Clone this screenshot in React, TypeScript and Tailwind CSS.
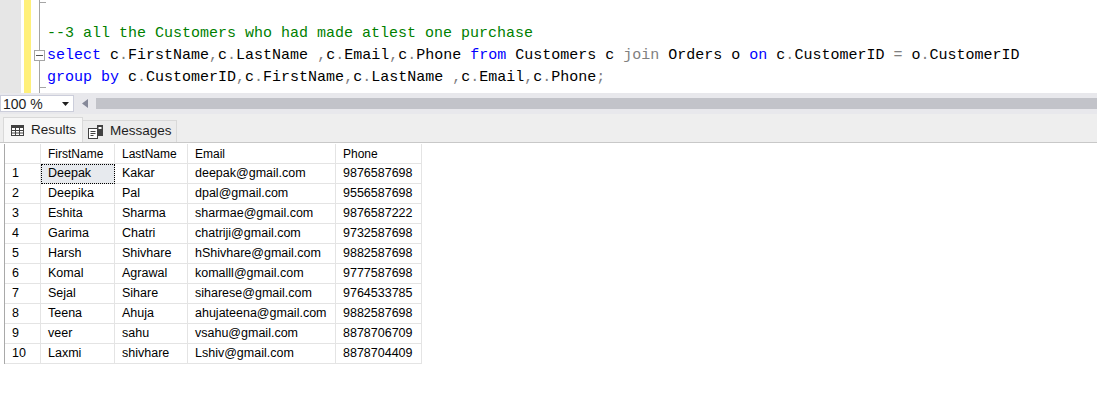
import React from 'react';

type Tok = { t: string; c?: string };

const K = '#0000ff';
const G = '#808080';
const C = '#008000';

// split plain text so punctuation gets the SSMS gray
const plain = (s: string): Tok[] =>
  s.split(/([.,=;])/).filter(Boolean).map((p) => ({ t: p, c: /^[.,=;]$/.test(p) ? G : undefined }));

const lines: Tok[][] = [
  [],
  [{ t: '--3 all the Customers who had made atlest one purchase', c: C }],
  [
    { t: 'select', c: K },
    ...plain(' c.FirstName,c.LastName ,c.Email,c.Phone '),
    { t: 'from', c: K },
    ...plain(' Customers c '),
    { t: 'join', c: G },
    ...plain(' Orders o '),
    { t: 'on', c: K },
    ...plain(' c.CustomerID = o.CustomerID'),
  ],
  [{ t: 'group by', c: K }, ...plain(' c.CustomerID,c.FirstName,c.LastName ,c.Email,c.Phone;')],
];

const rows = [
  ['Deepak', 'Kakar', 'deepak@gmail.com', '9876587698'],
  ['Deepika', 'Pal', 'dpal@gmail.com', '9556587698'],
  ['Eshita', 'Sharma', 'sharmae@gmail.com', '9876587222'],
  ['Garima', 'Chatri', 'chatriji@gmail.com', '9732587698'],
  ['Harsh', 'Shivhare', 'hShivhare@gmail.com', '9882587698'],
  ['Komal', 'Agrawal', 'komalll@gmail.com', '9777587698'],
  ['Sejal', 'Sihare', 'siharese@gmail.com', '9764533785'],
  ['Teena', 'Ahuja', 'ahujateena@gmail.com', '9882587698'],
  ['veer', 'sahu', 'vsahu@gmail.com', '8878706709'],
  ['Laxmi', 'shivhare', 'Lshiv@gmail.com', '8878704409'],
];

const cols = 'grid-cols-[36px_74px_73px_148px_86px]';
const cell = 'h-[20px] border-r border-b border-[#e4e4e4] pl-[7px] flex items-center whitespace-nowrap';

const GridIcon = () => (
  <svg width="13" height="11" viewBox="0 0 13 11">
    <rect x="0.5" y="0.5" width="12" height="10" fill="#fff" stroke="#424242" />
    <rect x="0.5" y="0.5" width="12" height="2.5" fill="#424242" />
    <line x1="0.5" y1="5.5" x2="12.5" y2="5.5" stroke="#424242" />
    <line x1="0.5" y1="8" x2="12.5" y2="8" stroke="#424242" />
    <line x1="4.5" y1="0.5" x2="4.5" y2="10.5" stroke="#424242" />
    <line x1="8.5" y1="0.5" x2="8.5" y2="10.5" stroke="#424242" />
  </svg>
);

const MsgIcon = () => (
  <svg width="16" height="14" viewBox="0 0 16 14">
    <rect x="0.5" y="3.5" width="9" height="10" fill="#fff" stroke="#424242" />
    <line x1="2.5" y1="6.5" x2="7.5" y2="6.5" stroke="#424242" />
    <line x1="2.5" y1="8.5" x2="7.5" y2="8.5" stroke="#424242" />
    <line x1="2.5" y1="10.5" x2="5.5" y2="10.5" stroke="#424242" />
    <rect x="9" y="0" width="6" height="11" fill="#424242" />
    <rect x="10.5" y="2" width="3" height="2" fill="#fff" />
  </svg>
);

export default function App() {
  return (
    <div className="w-[1097px] h-[413px] overflow-hidden bg-white flex flex-col" style={{ fontFamily: '"Liberation Sans", Arial, sans-serif' }}>
      {/* editor */}
      <div className="h-[93px] flex shrink-0">
        <div className="w-[21px] bg-[#e6e6e6]" />
        <div className="w-[3px]" />
        <div className="w-[7px] bg-[#fff07a]" />
        <div className="w-[8px]" />
        <div className="relative w-[8px] border-l border-[#a5a5a5]">
          <div className="absolute left-0 top-[2px] w-[6px] h-px bg-[#a5a5a5]" />
          <div className="absolute left-[-6px] top-[50px] w-[11px] h-[11px] border border-[#a5a5a5] bg-white flex items-center justify-center">
            <div className="w-[7px] h-px bg-[#555]" />
          </div>
          <div className="absolute left-0 top-[87px] w-[6px] h-px bg-[#a5a5a5]" />
        </div>
        <div className="text-[15px] leading-[22px] text-black pt-px" style={{ fontFamily: '"Liberation Mono", monospace' }}>
          {lines.map((ln, i) => (
            <div key={i} className="h-[22px] whitespace-pre">
              {ln.map((tk, j) => (
                <span key={j} style={tk.c ? { color: tk.c } : undefined}>{tk.t}</span>
              ))}
            </div>
          ))}
        </div>
      </div>

      {/* zoom + scrollbar */}
      <div className="h-[21px] bg-[#e8e8ec] flex items-center shrink-0">
        <div className="w-[74px] h-[17px] bg-white border border-[#cccedb] flex items-center justify-between pl-[2px] pr-[4px]">
          <span className="text-[14px] text-[#1e1e1e] leading-none">100 %</span>
          <svg width="7" height="4" viewBox="0 0 7 4"><path d="M0 0h7L3.5 4z" fill="#1e1e1e" /></svg>
        </div>
        <svg className="ml-[8px]" width="6" height="9" viewBox="0 0 6 9"><path d="M6 0v9L0 4.5z" fill="#868999" /></svg>
        <div className="ml-[8px] flex-1 h-[11px] bg-[#c2c3c9]" />
      </div>

      {/* tabs */}
      <div className="h-[29px] bg-[#eeeeee] flex items-end pl-[3px] shrink-0 border-b border-[#c8c8c8]">
        <div className="h-[25px] w-[80px] bg-[#f7f7f7] border border-b-0 border-[#d9d9d9] flex items-center gap-[7px] pl-[7px] text-[13.5px] text-[#1e1e1e]">
          <GridIcon />
          <span>Results</span>
        </div>
        <div className="h-[22px] w-[94px] bg-[#ececec] border border-l-0 border-b-0 border-[#d9d9d9] flex items-center gap-[6px] pl-[5px] text-[13.5px] text-[#1e1e1e]">
          <MsgIcon />
          <span>Messages</span>
        </div>
      </div>

      {/* results grid */}
      <div className="flex-1 pl-[4px] pt-px">
        <div className={`inline-grid ${cols} border-l border-[#a9a9a9] text-[12.5px] text-black`}>
          <div className={cell} />
          {['FirstName', 'LastName', 'Email', 'Phone'].map((h) => (
            <div key={h} className={`${cell} pl-[6px] text-[12px]`}>{h}</div>
          ))}
          {rows.map((r, i) => (
            <React.Fragment key={i}>
              <div className={`${cell} pl-[6px]`}>{i + 1}</div>
              {r.map((v, j) => (
                <div
                  key={j}
                  className={
                    i === 0 && j === 0
                      ? 'h-[20px] border-r border-b border-[#e4e4e4] flex items-center whitespace-nowrap bg-[#e7eaee] outline-1 outline-dotted outline-black -outline-offset-1 pl-[7px]'
                      : cell
                  }
                >
                  {v}
                </div>
              ))}
            </React.Fragment>
          ))}
        </div>
      </div>
    </div>
  );
}
